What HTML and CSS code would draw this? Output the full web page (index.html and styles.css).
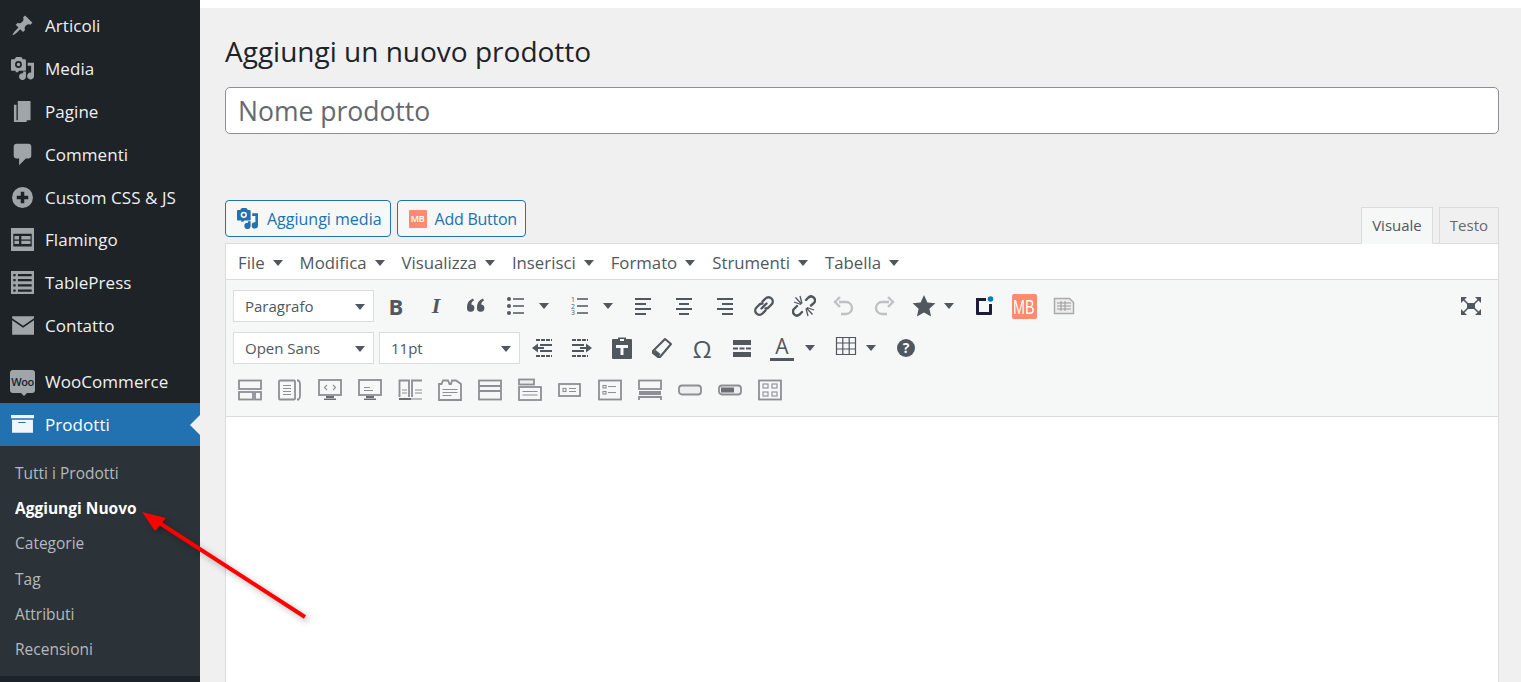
FILE: index.html
```html
<!DOCTYPE html>
<html lang="it">
<head>
<meta charset="utf-8">
<title>Aggiungi un nuovo prodotto</title>
<link rel="stylesheet" href="styles.css">
</head>
<body>
<aside class="sidebar">
  <ul class="menu">
    <li class="item"><svg class="mi" viewBox="0 0 20 20"><path d="M10.44 3.02l1.82-1.82 6.36 6.35-1.83 1.82c-1.05-.68-2.48-.57-3.41.36l-.75.75c-.92.93-1.04 2.35-.35 3.41l-1.83 1.82-2.41-2.41-2.8 2.79c-.42.42-3.38 2.71-3.8 2.29s1.86-3.39 2.28-3.81l2.79-2.79L4.1 9.36l1.83-1.82c1.05.69 2.48.57 3.4-.36l.75-.75c.93-.92 1.05-2.35.36-3.41z"/></svg>Articoli</li>
    <li class="item"><svg class="mi" viewBox="0 0 20 20"><path fill-rule="evenodd" d="M13 11V3c0-.55-.45-1-1-1h-1.700L9 0H4.500L3 2H1C.45 2 0 2.450 0 3v8c0 .55.45 1 1 1h3.200c-.2.400-.2.800-.2 1.200H6l1-1.200h5c.55 0 1-.45 1-1zM6.500 3.500a3 3 0 1 1 0 6 3 3 0 0 1 0-6z"/><circle cx="6.500" cy="6.500" r="1.500"/><path d="M14.500 5H20v11.500a3 3 0 1 1-2.500-2.900V7.500h-3V5zM10.500 12.500H13v4.500a3 3 0 1 1-2.500-2.900v-1.600z"/></svg>Media</li>
    <li class="item"><svg class="mi" viewBox="2.200 1.200 15 18"><path d="M6 15V2h10v15H6zm-1 2h8v1.500H3V5h2v12z"/></svg>Pagine</li>
    <li class="item"><svg class="mi" viewBox="1.500 1.500 16 17"><path d="M5 2h9c1.100 0 2 .9 2 2v7c0 1.100-.9 2-2 2h-2l-5 5v-5H5c-1.100 0-2-.9-2-2V4c0-1.100.9-2 2-2z"/></svg>Commenti</li>
    <li class="item"><svg class="mi" viewBox="-1 -1 22 22"><path fill-rule="evenodd" d="M10 0a10 10 0 1 0 0 20 10 10 0 0 0 0-20zm1.700 4.500v3.800h3.800v3.400h-3.800v3.800H8.300v-3.800H4.500V8.300h3.800V4.500h3.400z"/></svg>Custom CSS &amp; JS</li>
    <li class="item"><svg class="mi" viewBox="0 0 20 20"><path fill-rule="evenodd" d="M0 0h20v20H0V0zm2 5v11h16V5H2zm1 2h4v3H3V7zm6 0h8v3H9V7zM3 11h4v3H3v-3zm6 0h8v3H9v-3z"/></svg>Flamingo</li>
    <li class="item"><svg class="mi" viewBox="0 0 20 20"><path fill-rule="evenodd" d="M0 0h20v20H0V0zm2 2.500v2h2v-2H2zm4 0v2h12v-2H6zM2 7v2h2V7H2zm4 0v2h12V7H6zM2 11.500v2h2v-2H2zm4 0v2h12v-2H6zM2 16v2h2v-2H2zm4 0v2h12v-2H6z"/></svg>TablePress</li>
    <li class="item"><svg class="mi" viewBox="0 0 20 20"><path d="M1 2h19v1.800l-9.500 6.400L1 3.800V2zm0 3.500l9.500 6.500L20 5.500V18H1V5.500z"/></svg>Contatto</li>
  </ul>
  <ul class="menu menu-shop">
    <li class="item"><span class="woo"><span class="woo-text">Woo</span></span>WooCommerce</li>
    <li class="item item-active"><svg class="mi" viewBox="0 0 22 20"><path d="M0 1h22v3H0V1zm1 4.500h20V18H1V5.500zm6 2v1h7v-1H7z"/></svg>Prodotti<span class="tick"></span></li>
  </ul>
  <ul class="submenu">
    <li class="sub">Tutti i Prodotti</li>
    <li class="sub sub-current">Aggiungi Nuovo</li>
    <li class="sub">Categorie</li>
    <li class="sub">Tag</li>
    <li class="sub">Attributi</li>
    <li class="sub">Recensioni</li>
  </ul>
</aside>

<main class="main">
  <div class="strip"></div>
  <div class="wrap">
    <h1 class="title">Aggiungi un nuovo prodotto</h1>
    <div class="name-input">Nome prodotto</div>
    <div class="editor-tools">
      <button class="btn"><svg class="btn-ic" viewBox="0 0 20 20"><path fill-rule="evenodd" d="M13 11V3c0-.55-.45-1-1-1h-1.700L9 0H4.500L3 2H1C.45 2 0 2.450 0 3v8c0 .55.45 1 1 1h3.200c-.2.400-.2.800-.2 1.200H6l1-1.200h5c.55 0 1-.45 1-1zM6.500 3.500a3 3 0 1 1 0 6 3 3 0 0 1 0-6z"/><circle cx="6.500" cy="6.500" r="1.500"/><path d="M14.500 5H20v11.500a3 3 0 1 1-2.500-2.900V7.500h-3V5zM10.500 12.500H13v4.500a3 3 0 1 1-2.500-2.900v-1.600z"/></svg>Aggiungi media</button>
      <button class="btn btn-mb"><span class="mb-small">MB</span>Add Button</button>
      <div class="tabs">
        <span class="tab tab-on">Visuale</span>
        <span class="tab">Testo</span>
      </div>
    </div>
    <section class="editor">
      <nav class="menubar">
        <span class="mb-item">File</span>
        <span class="mb-item">Modifica</span>
        <span class="mb-item">Visualizza</span>
        <span class="mb-item">Inserisci</span>
        <span class="mb-item">Formato</span>
        <span class="mb-item">Strumenti</span>
        <span class="mb-item">Tabella</span>
      </nav>
      <div class="toolbar">
        <div class="row">
          <span class="sel">Paragrafo</span>
          <span class="tb tb-first"><span class="g g-b">B</span></span>
          <span class="tb"><span class="g g-i">I</span></span>
          <span class="tb"><svg viewBox="0 0 24 24"><path class="f" d="M3 13c0-4 2-7 6-8.500l1 2C8 7.500 7.300 9 7.300 10.500a3.700 3.700 0 1 1-4.300 3.500V13zM13 13c0-4 2-7 6-8.500l1 2c-2 1-2.700 2.500-2.700 4a3.700 3.700 0 1 1-4.300 3.500V13z"/></svg></span>
          <span class="tb"><svg viewBox="0 0 24 24"><g class="f"><circle cx="5" cy="5" r="2"/><circle cx="5" cy="12" r="2"/><circle cx="5" cy="19" r="2"/></g><path class="s" d="M9 5h11M9 12h11M9 19h11"/></svg></span>
          <span class="caret"></span>
          <span class="tb tb-gap"><svg viewBox="0 0 24 24"><text class="nums"><tspan x="3" y="8">1</tspan><tspan x="3" y="14.500">2</tspan><tspan x="3" y="21">3</tspan></text><path class="s" d="M9 5h11M9 12h11M9 19h11"/></svg></span>
          <span class="caret"></span>
          <span class="tb tb-gap"><svg viewBox="0 0 24 24"><path class="s2" d="M3 5h16M3 10h11M3 15h16M3 20h11" /></svg></span>
          <span class="tb"><svg viewBox="0 0 24 24"><path class="s2" d="M4 5h16M7 10h10M4 15h16M7 20h10"/></svg></span>
          <span class="tb"><svg viewBox="0 0 24 24"><path class="s2" d="M5 5h16M10 10h11M5 15h16M10 20h11"/></svg></span>
          <span class="tb"><svg viewBox="0 0 24 24"><path class="link" d="M9.500 14.500l5-5M10.500 7.500l3-3a4 4 0 0 1 6 6l-3 3a4 4 0 0 1-3 1M13.500 16.500l-3 3a4 4 0 0 1-6-6l3-3a4 4 0 0 1 3-1"/></svg></span>
          <span class="tb"><svg viewBox="0 0 24 24"><path class="link" d="M14 6l2.500-2.500a3.900 3.900 0 0 1 5.500 5.500L19 11.500M10 18l-2.500 2.500A3.900 3.900 0 0 1 2 15l3-3"/><path class="ray" d="M10 9.500L8 2M9 10.500L2 8M9.500 10L3.500 3.500M14 14.500L16 22M15 13.500L22 16M14.500 14L20.500 20.500"/></svg></span>
          <span class="tb"><svg viewBox="0 0 24 24"><path class="undo" d="M7 8h7a6 6 0 0 1 0 12H9M8 3L3 8l5 5"/></svg></span>
          <span class="tb"><svg viewBox="0 0 24 24"><path class="undo" d="M17 8h-7a6 6 0 0 0 0 12h5M16 3l5 5-5 5"/></svg></span>
          <span class="tb"><svg viewBox="0 0 24 24"><path class="f" d="M12 1l3.400 7.400 8 .9-6 5.400 1.700 7.900-7.100-4-7.100 4 1.700-7.900-6-5.400 8-.9z"/></svg></span>
          <span class="caret caret-star"></span>
          <span class="tb tb-cube"><svg viewBox="0 0 24 24"><path fill="#1c1b3a" d="M4 4h10v3H7v11h10v-8h3v10a1 1 0 0 1-1 1H5a1 1 0 0 1-1-1V4z"/><circle cx="18.500" cy="5" r="2.800" fill="#0a7cb5"/></svg></span>
          <span class="tb"><span class="mb-big"><span class="mb-big-text">MB</span></span></span>
          <span class="tb"><svg viewBox="0 0 24 24"><path d="M2.500 4.500h15l4 4v11h-19z" fill="#ececec" stroke="#aaa" stroke-width="1.500"/><path d="M5 9h14M5 12h14M5 15h14M9 7v10M13 7v10" stroke="#9a9a9a" fill="none"/></svg></span>
          <span class="tb tb-end"><svg viewBox="0 0 24 24"><rect class="f" x="8" y="9" width="8" height="6"/><path class="f" d="M2 3h6L2 9zM22 3v6l-6-6zM2 21v-6l6 6zM22 21h-6l6-6z"/><path class="s" d="M4 5l5 5M20 5l-5 5M4 19l5-5M20 19l-5-5"/></svg></span>
        </div>
        <div class="row">
          <span class="sel">Open Sans</span>
          <span class="sel sel-size">11pt</span>
          <span class="tb tb-first"><svg viewBox="0 0 24 24"><path class="dash" d="M6 4h16M6 20h16"/><path class="s2" d="M10 9h12M10 15h12M8 12h6"/><path class="f" d="M2 12l6-4.500v9z"/></svg></span>
          <span class="tb"><svg viewBox="0 0 24 24"><path class="dash" d="M2 4h16M2 20h16"/><path class="s2" d="M2 9h12M2 15h12M10 12h6"/><path class="f" d="M22 12l-6-4.500v9z"/></svg></span>
          <span class="tb"><svg viewBox="0 0 24 24"><path class="f" fill-rule="evenodd" d="M8 3V1.500h8V3h5a1 1 0 0 1 1 1v18a1 1 0 0 1-1 1H3a1 1 0 0 1-1-1V4a1 1 0 0 1 1-1h5zm2 0v2h4V3h-4zM6 9v3h4.500v7h3v-7H18V9H6z"/></svg></span>
          <span class="tb"><svg viewBox="0 0 24 24"><path d="M15 3l6 5-11 13H8l-5-4v-2L15 3z" fill="none" stroke="#50575e" stroke-width="2" stroke-linejoin="round"/><path class="f" d="M3.500 16l2-2 5 4-2 3H8z"/></svg></span>
          <span class="tb"><span class="g g-o">Ω</span></span>
          <span class="tb"><svg viewBox="0 0 24 24"><rect class="f" x="3" y="4" width="18" height="5"/><rect class="f" x="3" y="16" width="18" height="5"/><path d="M3 12.500h18" stroke="#50575e" stroke-width="2" stroke-dasharray="5 1.500" fill="none"/></svg></span>
          <span class="tb tb-a"><span class="g g-a">A</span></span>
          <span class="caret"></span>
          <span class="tb tb-table"><svg viewBox="0 0 24 24"><path d="M2.500 1.500h19v17h-19zM2.500 7h19M2.500 13h19M8.800 1.500v17M15.200 1.500v17" fill="none" stroke="#50575e" stroke-width="1.200"/></svg></span>
          <span class="caret caret-star"></span>
          <span class="tb tb-help"><svg viewBox="0 0 24 24"><circle class="f" cx="12" cy="12" r="9"/><text class="q" x="12" y="17">?</text></svg></span>
        </div>
        <div class="row row-plain">
          <span class="tb"><svg class="p" viewBox="0 0 24 24"><rect x="1" y="2.500" width="22" height="8.500"/><rect x="1" y="14" width="14" height="7.500"/><rect x="17" y="14" width="6" height="7.500"/></svg></span>
          <span class="tb"><svg class="p" viewBox="0 0 24 24"><rect x="1" y="2.500" width="16" height="19" rx="1"/><path class="thin" d="M5 7.500h8M5 10.500h8M5 13.500h8M5 16.500h8"/><path d="M19 2.500h1.500c1 .8 1.500 2 1.500 3.500v12c0 1.500-.5 2.700-1.500 3.500H19"/></svg></span>
          <span class="tb"><svg class="p" viewBox="0 0 24 24"><rect x="1" y="2" width="22" height="15"/><path class="thin" d="M9 7L6.500 9.500 9 12M15 7l2.500 2.500L15 12"/><path class="solid" d="M8 18h8v2H8zM6 20.500h12v1.500H6z"/></svg></span>
          <span class="tb"><svg class="p" viewBox="0 0 24 24"><rect x="1" y="2" width="22" height="15"/><path class="thin" d="M6 9.500h6M6 12.500h9"/><path class="solid" d="M8 18h8v2H8zM6 20.500h12v1.500H6z"/></svg></span>
          <span class="tb"><svg class="p" viewBox="0 0 24 24"><path d="M11 19V2.500H1.500V19M24 2.500h-10V19"/><path class="thin" d="M4 12h5M4 15h5M17 12h7M17 15h7"/><path class="solid" d="M1 20h12v2H1z"/><path class="light" d="M13 20h11v2H13z"/></svg></span>
          <span class="tb"><svg class="p" viewBox="0 0 24 24"><path d="M1 22V6h2.500L5 2.500h5L11.500 6H13l1-3.500h4l5 3.500v16z"/><path class="thin" d="M4.500 11.500h15M4.500 14.500h15M4.500 17.500h9"/></svg></span>
          <span class="tb"><svg class="p" viewBox="0 0 24 24"><rect x="1" y="2.500" width="22" height="19"/><path d="M1 8h22M1 13h22"/></svg></span>
          <span class="tb"><svg class="p" viewBox="0 0 24 24"><rect class="lightbox" x="1" y="1.500" width="15" height="5"/><rect x="1" y="9" width="22" height="13"/><path class="thin" d="M4.500 13.500h15M4.500 17h15"/></svg></span>
          <span class="tb"><svg class="p" viewBox="0 0 24 24"><rect x="1" y="6" width="21" height="12"/><rect class="thin" x="5" y="10.500" width="3" height="3"/><path class="thin" d="M11 10.500h7M11 13.500h7"/></svg></span>
          <span class="tb"><svg class="p" viewBox="0 0 24 24"><rect x="1" y="2.500" width="22" height="19"/><rect class="thin" x="5" y="7.500" width="3" height="2.500"/><rect class="thin" x="5" y="13.500" width="3" height="2.500"/><path class="thin" d="M10 8.500h8M10 14.500h8"/></svg></span>
          <span class="tb"><svg class="p" viewBox="0 0 24 24"><rect x="1" y="2.500" width="22" height="8.500"/><path d="M1 14h22M1 16h22M1 22v-3h22v3"/></svg></span>
          <span class="tb"><svg class="p" viewBox="0 0 24 24"><rect class="lightbox" x="1" y="7.500" width="22" height="9" rx="3"/></svg></span>
          <span class="tb"><svg class="p" viewBox="0 0 24 24"><rect class="lightbox" x="1" y="7.500" width="22" height="9" rx="3"/><rect class="solid" x="3" y="9.500" width="13" height="5"/></svg></span>
          <span class="tb"><svg class="p" viewBox="0 0 24 24"><rect x="1" y="2.500" width="22" height="19"/><rect class="thin" x="5" y="6" width="5" height="4"/><rect class="thin" x="14" y="6" width="5" height="4"/><rect class="thin" x="5" y="14" width="5" height="4"/><rect class="thin" x="14" y="14" width="5" height="4"/></svg></span>
        </div>
      </div>
      <div class="content"></div>
    </section>
  </div>
</main>

<svg class="arrow" width="200" height="130" viewBox="0 0 200 130">
  <path class="arrow-line" d="M165 107L18 12"/>
  <path class="arrow-head" d="M2 2L26 8 15 21z"/>
</svg>
</body>
</html>
```

FILE: styles.css
```css
* { box-sizing: border-box; }
html, body { margin: 0; height: 682px; overflow: hidden; }
body {
  display: flex;
  background: #f0f0f1;
  font-family: "Open Sans", "Noto Sans", sans-serif;
  color: #1d2327;
  position: relative;
}
ul { list-style: none; margin: 0; padding: 0; }

.sidebar { width: 200px; flex: none; height: 682px; background: #1d2327; padding-top: 4.6px; overflow: hidden; }
.item {
  position: relative;
  height: 42.8px;
  display: flex;
  align-items: center;
  padding-left: 11px;
  color: #f0f0f1;
  font-size: 17px;
  letter-spacing: .05px;
}
.mi { width: 23px; height: 23px; margin-right: 11px; fill: #a0a5aa; flex: none; }
.menu-shop { margin-top: 13.5px; }
.item-active { background: #2271b1; color: #fff; }
.item-active .mi { fill: #f0f6fc; }
.tick {
  position: absolute;
  right: 0;
  top: 50%;
  margin-top: -10px;
  border: 10px solid transparent;
  border-right-color: #f0f0f1;
  border-left-width: 0;
}
.woo {
  position: relative;
  width: 25px; height: 23px; margin: 0 10px 0 -1px; flex: none;
  background: #a0a5aa; border-radius: 3px;
  display: flex; align-items: center; justify-content: center;
}
.woo::after {
  content: "";
  position: absolute;
  left: 11px; bottom: -3px;
  border: 3px solid transparent;
  border-top-color: #a0a5aa;
  border-bottom-width: 0;
}
.woo-text { font-size: 11px; font-weight: 600; color: #1d2327; letter-spacing: -.4px; }
.submenu { background: #2c3338; padding: 10px 0 8.8px; }
.sub {
  height: 35.2px;
  line-height: 35.2px;
  padding-left: 15px;
  color: #b4b9be;
  font-size: 15.5px;
}
.sub-current { color: #fff; font-weight: 700; }

.main { flex: 1; min-width: 0; }
.strip { height: 8px; background: #fff; }
.wrap { padding: 23px 22px 0 25px; }
.title { margin: 0; font-size: 28px; font-weight: 400; line-height: 40px; color: #1d2327; }
.name-input {
  margin-top: 16px;
  height: 47px;
  line-height: 47px;
  padding-left: 12px;
  background: #fff;
  border: 1px solid #8c8f94;
  border-radius: 5px;
  font-size: 26.5px;
  color: #646970;
}
.editor-tools { margin-top: 66px; height: 43px; display: flex; align-items: flex-start; gap: 6px; position: relative; z-index: 1; }
.btn {
  height: 37px;
  display: flex;
  align-items: center;
  gap: 9px;
  padding: 0 8px 0 11px;
  background: #f6f7f7;
  border: 1px solid #2271b1;
  border-radius: 4px;
  color: #2271b1;
  font: 16px "Open Sans", sans-serif;
}
.btn-ic { width: 21px; height: 21px; fill: #2271b1; }
.btn-mb { gap: 8px; letter-spacing: -.25px; }
.mb-small {
  width: 18px; height: 18px; background: #ff8a70; color: #fff;
  font-size: 9px; font-weight: 600; text-align: center; line-height: 18px; border-radius: 1px;
}
.tabs { margin-left: auto; display: flex; gap: 6px; align-self: flex-end; margin-bottom: -1px; }
.tab {
  height: 37px;
  line-height: 35px;
  padding: 0 10px;
  background: #f0f0f1;
  border: 1px solid #dcdcde;
  color: #646970;
  font-size: 15px;
}
.tab-on { background: #f6f7f7; border-bottom-color: #f6f7f7; color: #50575e; }

.editor { border: 1px solid #dcdcde; border-bottom: 0; background: #fff; height: 439px; }
.menubar { height: 36px; display: flex; align-items: center; border-bottom: 1px solid #dcdcde; padding: 1px 0 0 12px; background: #fff; }
.mb-item { position: relative; font-size: 16.8px; color: #50575e; line-height: 35px; margin-right: 35px; }
.mb-item::after {
  content: "";
  position: absolute;
  top: 15px;
  border: 5px solid transparent;
  border-top: 6px solid #50575e;
  border-bottom-width: 0;
  right: -18px;
}
.toolbar { background: #f6f7f7; padding: 5px 0; border-bottom: 1px solid #dcdcde; height: 137px; }
.row { height: 42px; display: flex; align-items: center; padding: 0 7px; }
.row-plain { padding-left: 4px; }
.sel {
  position: relative;
  width: 141px;
  height: 32px;
  line-height: 31px;
  padding-left: 11px;
  background: #fff;
  border: 1px solid #dcdcde;
  color: #50575e;
  font-size: 15px;
}
.sel::after {
  content: "";
  position: absolute;
  right: 8px;
  top: 13px;
  border: 5px solid transparent;
  border-top: 6px solid #50575e;
  border-bottom-width: 0;
}
.sel-size { margin-left: 5px; }
.tb { width: 40px; height: 40px; display: flex; align-items: center; justify-content: center; flex: none; }
.tb svg { width: 24px; height: 24px; }
.tb-first { margin-left: 2px; }
.tb-gap { margin-left: 8px; }
.tb-cube { margin-left: 10px; }
.tb-end { margin-left: auto; }
.tb-table { margin-left: 8px; }
.tb-help { margin-left: 10px; }
.caret {
  width: 16px; flex: none; height: 0;
  border: 5px solid transparent;
  border-left-width: 3px;
  border-right-width: 3px;
  position: relative;
}
.caret::after {
  content: "";
  position: absolute;
  left: 0; top: -3px;
  border: 5px solid transparent;
  border-top: 6px solid #50575e;
  border-bottom-width: 0;
}
.caret-star { width: 10px; border-left-width: 0; border-right-width: 0; }
.g { color: #50575e; line-height: 1; }
.g-b { font: 700 22px "Open Sans", sans-serif; }
.g-i { font: italic 700 22px "Liberation Serif", serif; }
.g-o { font: 400 24px "Open Sans", sans-serif; }
.g-a {
  font: 400 21px "Open Sans", sans-serif;
  border-bottom: 3px solid #50575e;
  padding: 0 5px 1px;
  display: block;
  line-height: 21px;
}
.f { fill: #50575e; }
.s { stroke: #50575e; stroke-width: 1.5; fill: none; }
.s2 { stroke: #50575e; stroke-width: 2.2; fill: none; }
.dash { stroke: #50575e; stroke-width: 2; stroke-dasharray: 4 1; fill: none; }
.link { stroke: #50575e; stroke-width: 2.4; fill: none; stroke-linecap: round; }
.ray { stroke: #50575e; stroke-width: 1.3; fill: none; }
.undo { stroke: #bfc1c4; stroke-width: 2.4; fill: none; }
.nums { font: 7px "Open Sans", sans-serif; fill: #50575e; }
.q { font: 700 14px "Open Sans", sans-serif; fill: #f6f7f7; text-anchor: middle; }
.mb-big {
  width: 25px; height: 25px; border-radius: 2px; background: #ff8a70; color: #fff;
  display: flex; align-items: center; justify-content: center;
  overflow: hidden;
}
.mb-big-text {
  font: 400 21px/25px "Liberation Sans", sans-serif;
  transform: scaleX(.68);
  display: block;
}
.p { fill: none; stroke: #8c8f94; stroke-width: 1.8; }
.p .thin { stroke-width: 1.1; }
.p .solid { fill: #6b6e73; stroke: none; }
.p .light { fill: #bbb; stroke: none; }
.p .lightbox { fill: #eee; }

.arrow { position: absolute; left: 140px; top: 510px; filter: drop-shadow(3px 3px 3px rgba(0,0,0,.3)); }
.arrow-line { stroke: #f00; stroke-width: 4px; fill: none; }
.arrow-head { fill: #f00; }
```
